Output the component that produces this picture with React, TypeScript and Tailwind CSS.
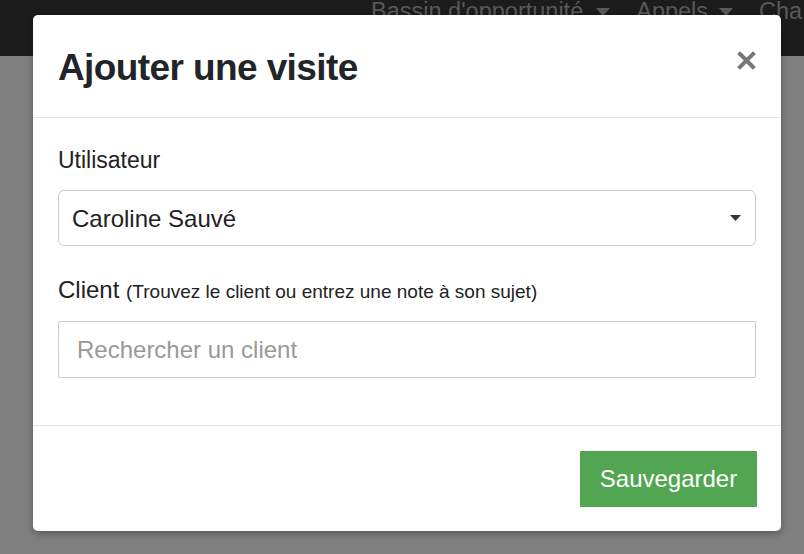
export default function App() {
  return (
    <div className="relative w-[804px] h-[554px] overflow-hidden bg-[#808080] font-['Liberation_Sans',Arial,sans-serif]">
      {/* page behind the backdrop */}
      <div className="h-[56px] bg-[#1c1c1c] pl-[371px] text-[23.5px] text-[#595959] leading-none">
        <div className="flex items-center gap-[26px] whitespace-nowrap">
          <span className="flex items-center gap-[13px]">
            Bassin d'opportunité
            <svg width="14" height="8" viewBox="0 0 14 8">
              <path d="M0 0 L14 0 L7 8 Z" fill="#595959" />
            </svg>
          </span>
          <span className="flex items-center gap-[11px]">
            Appels
            <svg width="14" height="8" viewBox="0 0 14 8">
              <path d="M0 0 L14 0 L7 8 Z" fill="#595959" />
            </svg>
          </span>
          <span>Cha</span>
        </div>
      </div>

      {/* modal */}
      <div className="absolute left-[33px] top-[15px] w-[748px] h-[516px] bg-white rounded-[5px] shadow-[0_3px_9px_rgba(0,0,0,0.3)] flex flex-col">
        <div className="h-[103px] border-b border-[#e5e5e5] flex items-center justify-between px-[25px]">
          <h4 className="text-[37px] font-bold tracking-[-0.6px] text-[#212529] pt-[3px]">Ajouter une visite</h4>
          <svg width="19" height="19" viewBox="0 0 19 19" className="mb-[12px]">
            <path d="M3 3 L16 16 M16 3 L3 16" stroke="#777" strokeWidth="4" strokeLinecap="square" />
          </svg>
        </div>

        <div className="flex-1 px-[25px] pt-[29px]">
          <label className="block text-[23px] text-[#222] leading-[26px]">Utilisateur</label>
          <div className="mt-[17px] h-[56px] border border-[#ccc] rounded-[6px] flex items-center justify-between pl-[13px] pr-[14px]">
            <span className="text-[24px] text-[#222] pt-[1px]">Caroline Sauvé</span>
            <svg width="11" height="6" viewBox="0 0 11 6">
              <path d="M0 0 L11 0 L5.5 6 Z" fill="#333" />
            </svg>
          </div>

          <label className="block mt-[30px] text-[24px] text-[#222] leading-[28px]">
            Client <span className="text-[19px]">(Trouvez le client ou entrez une note à son sujet)</span>
          </label>
          <div className="mt-[15px] h-[57px] border border-[#ccc] rounded-[2px] flex items-center pl-[18px]">
            <span className="text-[24px] text-[#999]">Rechercher un client</span>
          </div>
        </div>

        <div className="h-[106px] border-t border-[#e5e5e5] flex items-start justify-end px-[24px] pt-[25px]">
          <button className="h-[56px] w-[177px] bg-[#53a651] text-white text-[24px] rounded-[1px]">Sauvegarder</button>
        </div>
      </div>
    </div>
  );
}
